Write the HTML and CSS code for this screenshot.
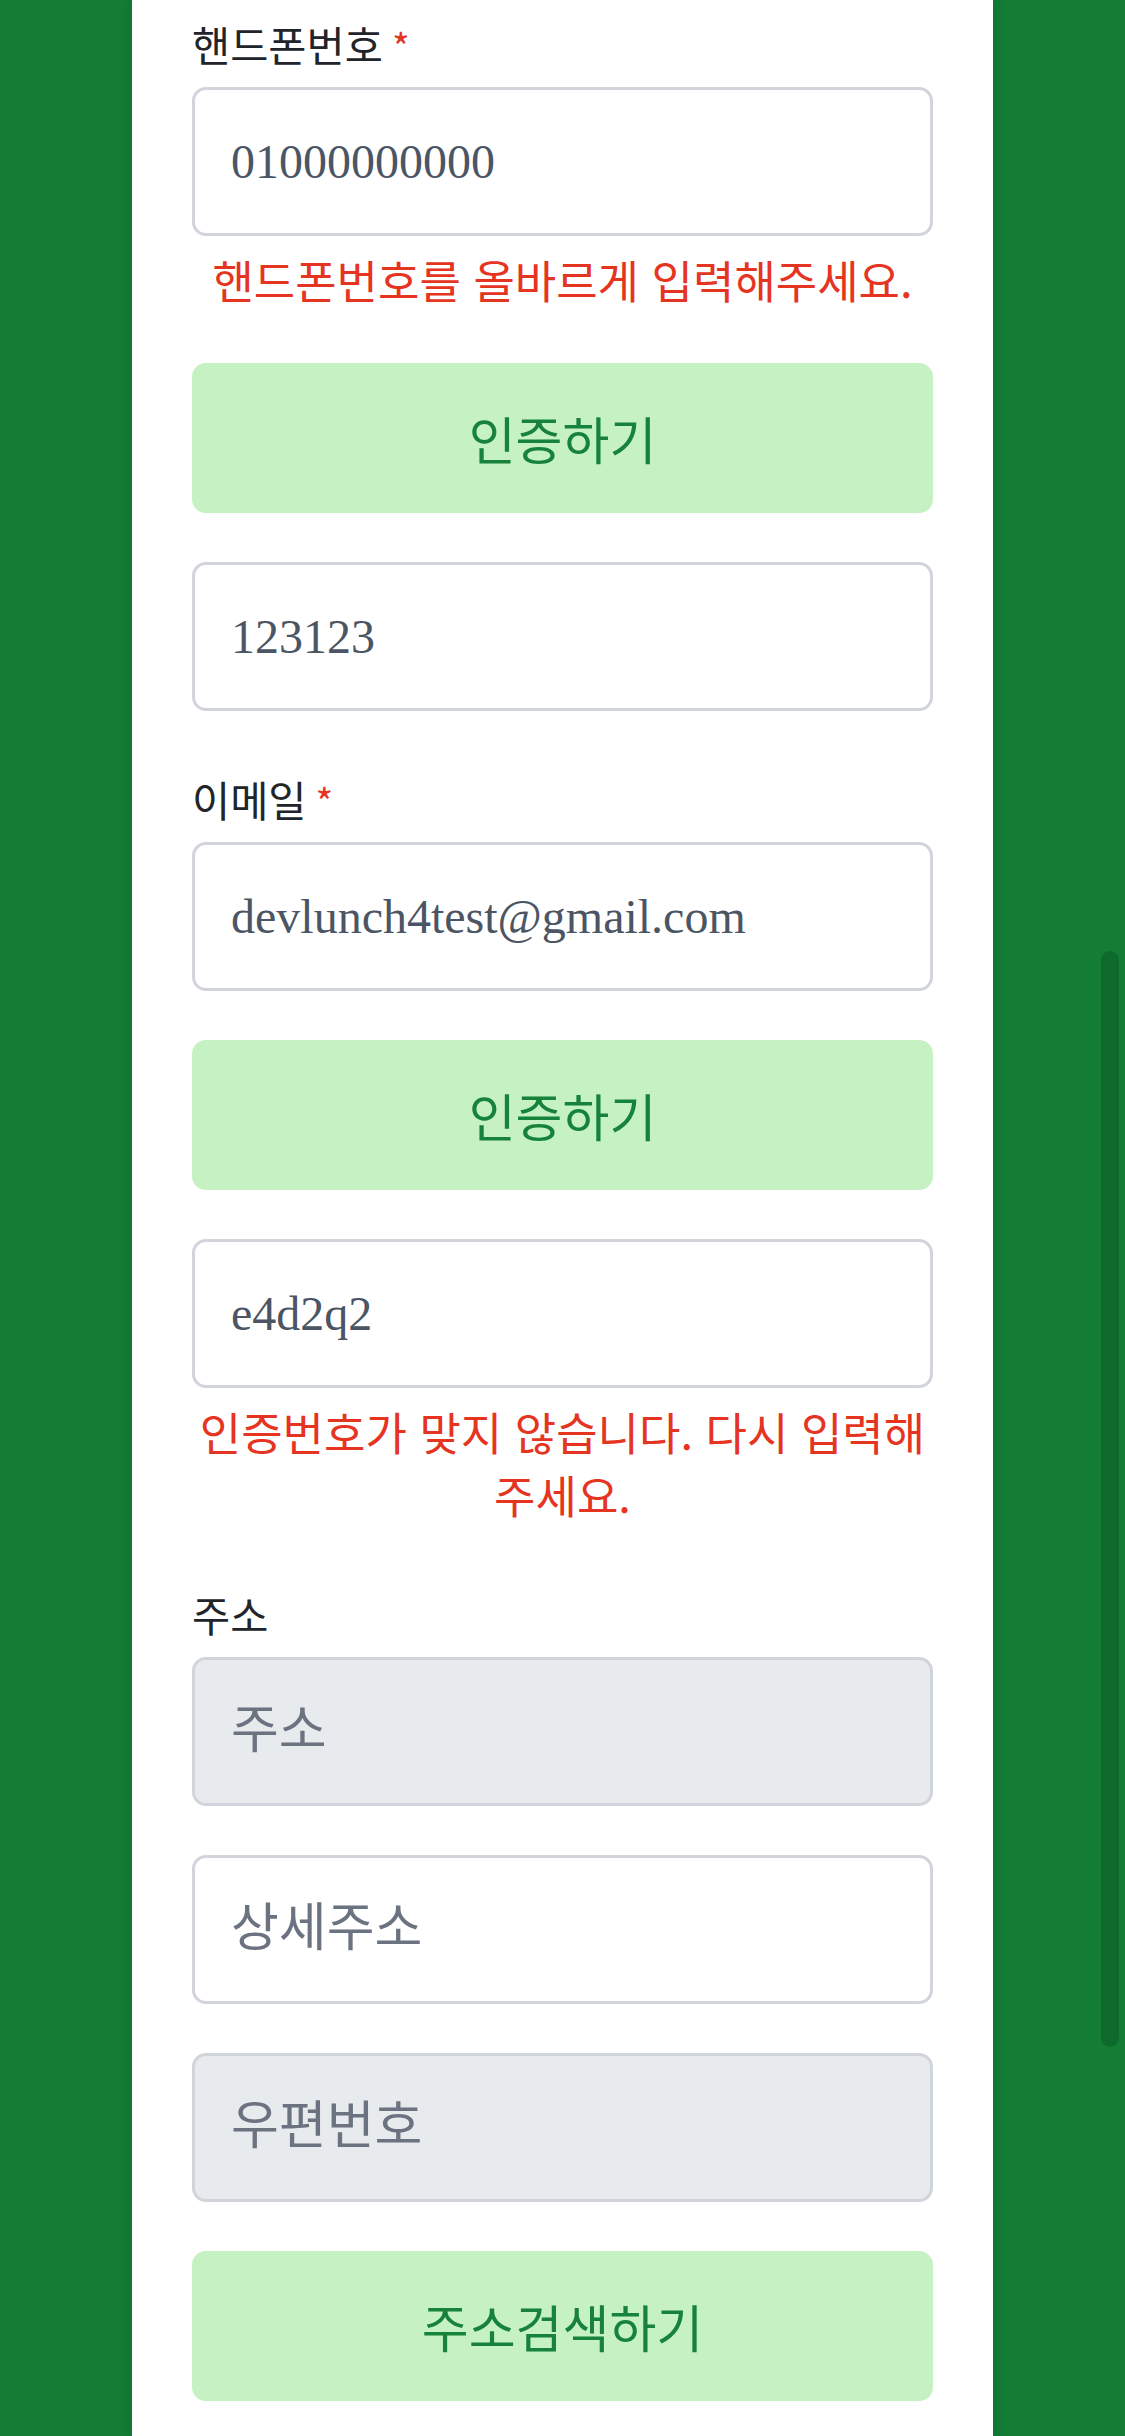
FILE: index.html
```html
<!DOCTYPE html>
<html lang="ko">
<head>
<meta charset="utf-8">
<title>회원가입</title>
<link rel="stylesheet" href="styles.css">
</head>
<body>
<main class="panel">
  <form class="form">
    <div class="field field--err">
      <label class="label">핸드폰번호<span class="req">*</span></label>
      <input class="input" type="text" value="01000000000" readonly>
      <p class="error">핸드폰번호를 올바르게 입력해주세요.</p>
    </div>
    <button type="button" class="btn">인증하기</button>
    <input class="input" type="text" value="123123" readonly>
    <div class="field field--spaced">
      <label class="label">이메일<span class="req">*</span></label>
      <input class="input" type="text" value="devlunch4test@gmail.com" readonly>
    </div>
    <button type="button" class="btn">인증하기</button>
    <div class="field">
      <input class="input" type="text" value="e4d2q2" readonly>
      <p class="error">인증번호가 맞지 않습니다. 다시 입력해주세요.</p>
    </div>
    <div class="field field--spaced">
      <label class="label">주소</label>
      <input class="input input--gray" type="text" placeholder="주소" readonly>
    </div>
    <input class="input" type="text" placeholder="상세주소" readonly>
    <input class="input input--gray" type="text" placeholder="우편번호" readonly>
    <button type="button" class="btn">주소검색하기</button>
  </form>
</main>
<div class="scroll-thumb"></div>
</body>
</html>
```
FILE: styles.css
```css
* { box-sizing: border-box; }
html, body { margin: 0; padding: 0; }
body {
  background: #137c35;
  font-family: "Noto Sans CJK KR", "Noto Sans", sans-serif;
  min-height: 2436px;
  overflow: hidden;
}
.panel {
  width: 861px;
  margin: 0 auto;
  min-height: 2436px;
  background: #ffffff;
  padding: 15px 60px 35px;
  box-shadow: 0 0 14px rgba(0, 0, 0, 0.12);
}
.form {
  display: flex;
  flex-direction: column;
  gap: 49px;
}
.field {
  display: flex;
  flex-direction: column;
}
.field--spaced { padding-top: 10px; }
.field--err { padding-bottom: 3px; }
.label {
  display: block;
  font-size: 41.5px;
  line-height: 58px;
  height: 58px;
  color: #212529;
  margin-bottom: 14px;
}
.req {
  color: #e5341f;
  font-size: 38px;
  line-height: 1;
  margin-left: 9px;
}
.input {
  display: block;
  width: 100%;
  height: 149px;
  border: 3px solid #d1d5db;
  border-radius: 14px;
  padding: 0 36px;
  background: #ffffff;
  font-family: "Liberation Serif", "Noto Sans CJK KR", serif;
  font-size: 48px;
  color: #4b5563;
  outline: none;
  margin: 0;
}
.input::placeholder {
  font-family: "Noto Sans CJK KR", sans-serif;
  font-size: 52px;
  color: #6b7280;
  opacity: 1;
}
.input--gray { background: #e8ebee; }
.error {
  margin: 12px 0 0;
  font-size: 45px;
  line-height: 63px;
  color: #e5341f;
  text-align: center;
}
.btn {
  display: block;
  width: 100%;
  height: 150px;
  border: none;
  border-radius: 14px;
  background: #c6f2c3;
  color: #17823a;
  font-family: "Noto Sans CJK KR", sans-serif;
  font-size: 51px;
  padding: 0;
  margin: 0;
}
.scroll-thumb {
  position: fixed;
  left: 1101px;
  top: 951px;
  width: 18px;
  height: 1096px;
  border-radius: 9px;
  background: #0d6a2c;
}
```
